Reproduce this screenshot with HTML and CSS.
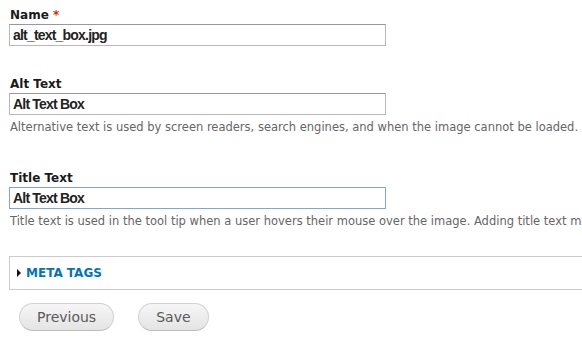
FILE: index.html
```html
<!DOCTYPE html>
<html lang="en">
<head>
    <meta charset="UTF-8">
    <title>Edit image</title>
    <link rel="stylesheet" href="styles.css">
</head>
<body>
    <form class="media-form">
        <div class="form-item first">
            <label class="form-label" for="name">Name <span class="required">*</span></label>
            <input class="form-text" id="name" type="text" value="alt_text_box.jpg">
        </div>
        <div class="form-item">
            <label class="form-label" for="alt">Alt Text</label>
            <input class="form-text" id="alt" type="text" value="Alt Text Box">
            <div class="description">Alternative text is used by screen readers, search engines, and when the image cannot be loaded.</div>
        </div>
        <div class="form-item">
            <label class="form-label" for="title">Title Text</label>
            <input class="form-text focused" id="title" type="text" value="Alt Text Box">
            <div class="description">Title text is used in the tool tip when a user hovers their mouse over the image. Adding title text may help</div>
        </div>
        <div class="fieldset">
            <span class="fieldset-toggle"></span>
            <a class="fieldset-title" href="#">META TAGS</a>
        </div>
        <div class="form-actions">
            <button class="button" type="button">Previous</button>
            <button class="button" type="button">Save</button>
        </div>
    </form>
</body>
</html>
```

FILE: styles.css
```css
body {
    margin: 0;
    padding: 0;
    background: #fff;
    font-family: 'DejaVu Sans', Verdana, sans-serif;
    color: #222;
    overflow: hidden;
}
.media-form {
    padding: 6px 0 0 9px;
    width: 573px;
    overflow: hidden;
}
.form-item {
    margin-top: 29px;
}
.form-item.first {
    margin-top: 0;
}
.form-label {
    display: block;
    font-weight: bold;
    font-size: 12px;
    line-height: 18px;
    padding-left: 1px;
    color: #1a1a1a;
}
.required {
    color: #e32700;
}
.form-text {
    display: block;
    box-sizing: border-box;
    width: 377px;
    height: 22px;
    margin: 0;
    padding: 0 3px;
    border: 1px solid #b8b8b8;
    border-top-color: #999;
    font-family: 'Liberation Sans', Arial, sans-serif;
    font-weight: bold;
    font-size: 14px;
    letter-spacing: -0.8px;
    color: #222;
    outline: none;
}
.form-text.focused {
    border-color: #7ea6d8;
}
.description {
    font-size: 11.5px;
    line-height: 16px;
    margin-top: 4px;
    padding: 0 0 5px 1px;
    color: #666;
    white-space: nowrap;
}
.fieldset {
    margin-top: 22px;
    height: 32px;
    border: 1px solid #ccc;
    border-right: none;
    display: flex;
    align-items: center;
    padding-left: 7px;
}
.fieldset-toggle {
    width: 0;
    height: 0;
    border-top: 4px solid transparent;
    border-bottom: 4px solid transparent;
    border-left: 4px solid #111;
    margin-right: 5px;
}
.fieldset-title {
    color: #0074bd;
    font-weight: bold;
    font-size: 12px;
    text-decoration: none;
}
.form-actions {
    display: flex;
    gap: 24px;
    padding: 13px 0 0 10px;
}
.button {
    box-sizing: border-box;
    font-family: 'DejaVu Sans', Verdana, sans-serif;
    font-size: 14px;
    color: #5a5a5a;
    height: 28px;
    padding: 0 17px;
    border: 1px solid #d2d2d2;
    border-bottom-color: #bdbdbd;
    border-radius: 14px;
    background: linear-gradient(#f6f6f6, #e4e4e4);
}
```
